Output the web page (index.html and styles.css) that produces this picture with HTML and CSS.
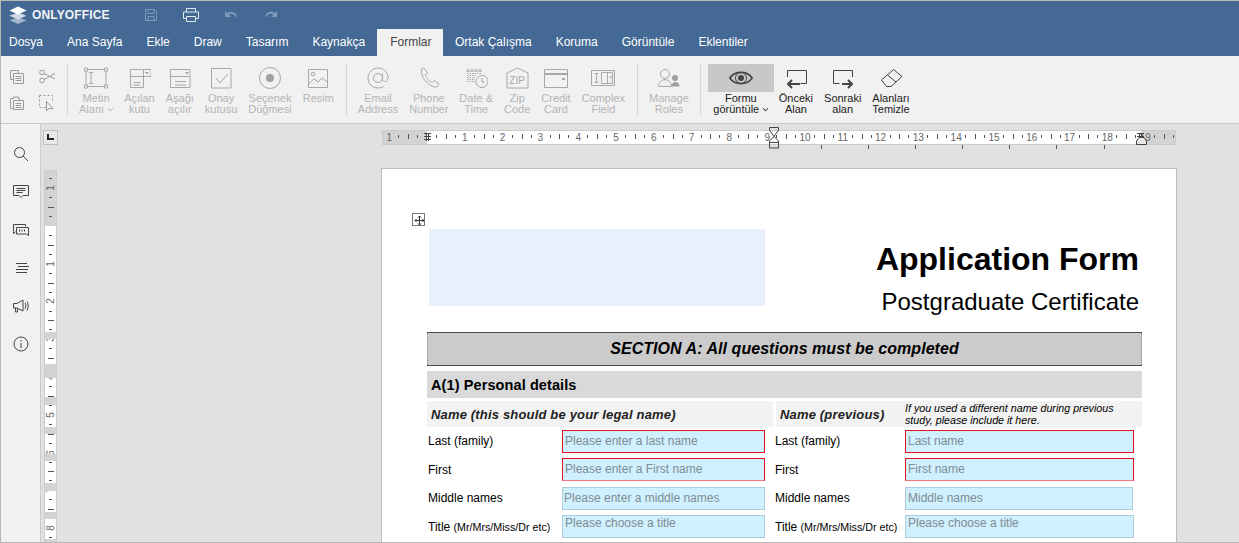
FILE: index.html
```html
<!DOCTYPE html>
<html lang="tr">
<head>
<meta charset="utf-8">
<title>ONLYOFFICE</title>
<link rel="stylesheet" href="styles.css">
</head>
<body>
<div class="app">
  <header class="header">
    <div class="titlebar">
      <svg class="logo" width="20" height="20" viewBox="0 0 20 20"><path class="l3" d="M10 12.500 1.500 15.300 10 19l8.500-3.700z"/><path class="l2" d="M10 7.500 1.500 10.800 10 14.600l8.500-3.800z"/><path class="l1" d="M10 1.500 1.500 5.500 10 9.500l8.500-4z"/></svg>
      <span class="brand">ONLYOFFICE</span>
      <svg class="tb save" width="16" height="16" viewBox="0 0 16 16"><path d="M2.500 2.500h9l2 2v9h-11zM5 2.500v4h6v-4M5 13.500v-4h6v4"/></svg>
      <svg class="tb print" width="18" height="16" viewBox="0 0 18 16"><path d="M4.500 5V1.500h9V5M4.500 11.500h-3V5h15v6.500h-3M4.500 9.500h9v5h-9z"/></svg>
      <svg class="tb undo" width="16" height="16" viewBox="0 0 16 16"><path d="M2 4v6h6L5.600 7.700C8 6 11 7 13 10l1.200-.8C12 5 8 3.500 4.300 6.300z"/></svg>
      <svg class="tb redo" width="16" height="16" viewBox="0 0 16 16"><path d="M14 4v6H8l2.400-2.300C8 6 5 7 3 10l-1.200-.8C4 5 8 3.500 11.700 6.300z"/></svg>
    </div>
    <nav class="tabs">
      <span class="tab">Dosya</span>
      <span class="tab">Ana Sayfa</span>
      <span class="tab">Ekle</span>
      <span class="tab">Draw</span>
      <span class="tab">Tasarım</span>
      <span class="tab">Kaynakça</span>
      <span class="tab active">Formlar</span>
      <span class="tab">Ortak Çalışma</span>
      <span class="tab">Koruma</span>
      <span class="tab">Görüntüle</span>
      <span class="tab">Eklentiler</span>
    </nav>
  </header>

  <section class="toolbar">
    <div class="group clip">
      <svg class="ic16 off" viewBox="0 0 16 16"><path d="M1.500 1.500h8v3M1.500 1.500v9h3M4.500 4.500h10v10h-10zM6.500 7.500h6M6.500 9.500h6M6.500 11.500h6"/></svg>
      <svg class="ic16 off" viewBox="0 0 16 16"><circle cx="3" cy="3.500" r="2.300"/><circle cx="3" cy="11.500" r="2.300"/><path d="M5 4.500l11 5.500M5 10.500l11-6"/></svg>
      <svg class="ic16 off" viewBox="0 0 16 16"><path d="M1.500 3.500h3V2h5v1.500h1V5M1.500 3.500v10h3M4.500 5.500h10v9h-10zM6.500 8.500h6M6.500 10.500h6M6.500 12.500h6"/></svg>
      <svg class="ic16 off" viewBox="0 0 16 16"><path stroke-dasharray="2 2" d="M.5.500h13v7M.5.500v12h6"/><path d="M7.500 6.500v9l2.500-2h4z"/></svg>
    </div>
    <i class="sep"></i>
    <div class="group">
      <div class="btn off">
        <svg class="ic" viewBox="0 0 24 24"><path d="M2 3.500h20M2 20.500h20M2 3.500v17M22 3.500v17M5 6.500h4M5 17.500h4M7 6.500v11"/><path class="dots" d="M.5 2h3v3h-3zM20.500 2h3v3h-3zM.5 19h3v3h-3zM20.500 19h3v3h-3z"/></svg>
        <span class="lbl">Metin<br>Alanı <b class="car"></b></span>
      </div>
      <div class="btn off">
        <svg class="ic" viewBox="0 0 24 24"><path d="M3.500 3.500h13v18h-13zM16.500 3.500h7.500v7h-7.500M3.500 10.500h13M6.500 16.500h7M6.500 19h7"/><path class="solid" d="M18 6h4l-2 2.500z"/></svg>
        <span class="lbl">Açılan<br>kutu</span>
      </div>
      <div class="btn off">
        <svg class="ic" viewBox="0 0 24 24"><path d="M2.500 3.500h19.500v18H2.500zM2.500 10.500h19.500M7 15.500h11M7 19h11"/><path class="solid" d="M17 6h4l-2 2.500z"/></svg>
        <span class="lbl">Aşağı<br>açılır</span>
      </div>
      <div class="btn off">
        <svg class="ic" viewBox="0 0 24 24"><path d="M2.500 2.500h19.500v19.500H2.500zM7 12l4 5 8-9"/></svg>
        <span class="lbl">Onay<br>kutusu</span>
      </div>
      <div class="btn off">
        <svg class="ic" viewBox="0 0 24 24"><circle cx="12" cy="12" r="10.500"/><circle class="solid" cx="12" cy="12" r="4"/></svg>
        <span class="lbl">Seçenek<br>Düğmesi</span>
      </div>
      <div class="btn off">
        <svg class="ic" viewBox="0 0 24 24"><path d="M2.500 3.500h19v18h-19zM2.500 18l5.500-5 4 3 4-4 5.500 4"/><circle cx="7" cy="8" r="1.800"/></svg>
        <span class="lbl">Resim</span>
      </div>
    </div>
    <i class="sep"></i>
    <div class="group">
      <div class="btn off">
        <svg class="ic" viewBox="0 0 24 24"><circle cx="12" cy="12" r="4.500"/><path d="M16.500 7.500v6c0 3 5.500 3 5.500-2C22 6 17 2 12 2S2 6.500 2 12s4.500 10 10 10c2 0 4-.5 5.500-1.500"/></svg>
        <span class="lbl">Email<br>Address</span>
      </div>
      <div class="btn off">
        <svg class="ic" viewBox="0 0 24 24"><path d="M4 3.500l3-1.500 3.500 5L8.500 9c.5 3 4 7 7 7.500l2-2 4.500 3.500-2 3c-7 1-17-9-15.500-17.500z"/></svg>
        <span class="lbl">Phone<br>Number</span>
      </div>
      <div class="btn off">
        <svg class="ic" viewBox="0 0 24 24"><path stroke-dasharray="1.500 1" d="M3 7.500h14M3 9.500h10M3 11.500h8M3 13.500h8M3 15.500h8"/><path d="M2 5h16M4 2.500v3M8 2.500v3M12 2.500v3M16 2.500v3"/><circle cx="18" cy="15.500" r="6"/><path d="M18 12v4h3"/></svg>
        <span class="lbl">Date &amp;<br>Time</span>
      </div>
      <div class="btn off">
        <svg class="ic" viewBox="0 0 24 24"><path d="M2 7 12.500 2 23 7v15H2z"/></svg>
        <span class="zip">ZIP</span>
        <span class="lbl">Zip<br>Code</span>
      </div>
      <div class="btn off">
        <svg class="ic" viewBox="0 0 24 24"><path d="M.5 3.500h23v18H.5z"/><path class="thick" d="M.5 8h23"/><path class="thick" d="M18 13h3"/></svg>
        <span class="lbl">Credit<br>Card</span>
      </div>
      <div class="btn off">
        <svg class="ic" viewBox="0 0 24 24"><path d="M.5 4.500h23v15H.5zM10.500 6.500h11v11h-11zM16.500 6.500v11M3.500 7.500h4M3.500 16.500h4M5.500 7.500v9"/><path class="solid" d="M18 10.500h3l-1.500 2z"/></svg>
        <span class="lbl">Complex<br>Field</span>
      </div>
    </div>
    <i class="sep"></i>
    <div class="group roles">
      <div class="btn off">
        <svg class="ic" viewBox="0 0 24 24"><circle cx="8" cy="8" r="4.500"/><path d="M1.500 20.500c0-9 13-9 13 0z"/><circle class="solid" cx="18" cy="12" r="3"/><path class="solid" d="M14.500 20.500c0-6 8-6 8 0z"/></svg>
        <span class="lbl">Manage<br>Roles</span>
      </div>
    </div>
    <i class="sep"></i>
    <div class="group on-group">
      <div class="btn view">
        <span class="eyebox"><svg class="ic" viewBox="0 0 24 24"><path class="eye" d="M.8 12C6 4.500 18 4.500 23.200 12 18 19.500 6 19.500.8 12z"/><circle cx="12" cy="12" r="5.500"/><circle class="solid" cx="12" cy="12" r="3"/></svg></span>
        <span class="lbl">Formu<br>görüntüle <b class="car"></b></span>
      </div>
      <div class="btn">
        <svg class="ic" viewBox="0 0 24 24"><path d="M3.500 11V4.500h19v13h-6"/><path class="thick" d="M16 18H4M8 14l-4 4 4 4"/></svg>
        <span class="lbl">Önceki<br>Alan</span>
      </div>
      <div class="btn">
        <svg class="ic" viewBox="0 0 24 24"><path d="M8.500 17.500h-6v-13h19V11"/><path class="thick" d="M11 18h10M17 14l4 4-4 4"/></svg>
        <span class="lbl">Sonraki<br>alan</span>
      </div>
      <div class="btn">
        <svg class="ic" viewBox="0 0 24 24"><path d="M14.500 3.500 23 10.500 12 20.500H7.500L2.500 14zM8.500 9l8.500 7"/></svg>
        <span class="lbl">Alanları<br>Temizle</span>
      </div>
    </div>
  </section>

  <div class="work">
    <aside class="side">
      <svg class="sic" viewBox="0 0 16 16"><circle cx="6.500" cy="6.500" r="5"/><path d="M10.200 10.200 15 15"/></svg>
      <svg class="sic" viewBox="0 0 16 16"><path d="M.5 1.500h15v10H10l-2 2-2-2H.5zM3.500 4.500h9M3.500 6.500h9M3.500 8.500h6"/></svg>
      <svg class="sic" viewBox="0 0 16 16"><path d="M.5 9.500v-7h12v2M.5 9.500V12l2-2.500"/><path d="M3.500 5.500h12v8l-2-1.500h-10z"/><path class="dotl" d="M6 8.500h1M8.500 8.500h1M11 8.500h1"/></svg>
      <svg class="sic" viewBox="0 0 16 16"><path d="M3 3.500h11M5 6.500h11M3 9.500h12M3 12.500h11"/></svg>
      <svg class="sic" viewBox="0 0 16 16"><path d="M.5 5.500H4l6-3.500v11L4 10H.5zM2.500 10v4h2v-3.500M12 5c1 1.500 1 4 0 6M14 3.500c1.500 2.500 1.500 6.500 0 9"/></svg>
      <svg class="sic" viewBox="0 0 16 16"><circle cx="8" cy="8" r="7"/><path d="M8 7v5M8 4v1.500"/></svg>
    </aside>

    <main class="canvas">
      <div class="corner"><i></i></div>
      <div class="vruler">
        <div class="vc"><span>1</span></div>
        <div class="vc"></div>
        <div class="vc"><span>1</span></div>
        <div class="vc"><span>2</span></div>
        <div class="vc"><span>3</span></div>
        <div class="vc"><span>4</span></div>
        <div class="vc"><span>5</span></div>
        <div class="vc"><span>6</span></div>
        <div class="vc"><span>7</span></div>
        <div class="vc"><span>8</span></div>
      </div>

      <div class="docarea">
        <div class="hruler">
          <div class="hclip">
            <div class="hcells">
              <span class="hc">1</span><span class="hc"></span><span class="hc">1</span><span class="hc">2</span><span class="hc">3</span><span class="hc">4</span><span class="hc">5</span><span class="hc">6</span><span class="hc">7</span><span class="hc">8</span><span class="hc">9</span><span class="hc">10</span><span class="hc">11</span><span class="hc">12</span><span class="hc">13</span><span class="hc">14</span><span class="hc">15</span><span class="hc">16</span><span class="hc">17</span><span class="hc">18</span><span class="hc">19</span><span class="hc"></span>
            </div>
          </div>
          <i class="hash h-left"></i>
          <i class="hash h-right"></i>
          <i class="cols"></i>
          <svg class="indent" width="12" height="22" viewBox="0 0 12 22"><path d="M1.500.5h9V3L6 9.500 1.500 3zM1.500 15.500V14L6 9.500 10.500 14v1.500zM1.500 15.500h9v5.500h-9z"/></svg>
          <svg class="rindent" width="11" height="8" viewBox="0 0 11 8"><path d="M.5 7.500V4L3 .5h5L10.500 4v3.500z"/></svg>
        </div>

        <article class="page">
          <span class="move"><svg width="11" height="11" viewBox="0 0 11 11"><path d="M5.500 1v9M1 5.500h9M4 2.500 5.500 1 7 2.500M4 8.500 5.500 10 7 8.500M2.500 4 1 5.500 2.500 7M8.500 4 10 5.500 8.500 7"/></svg></span>
          <div class="head">
            <div class="logoph"></div>
            <div class="titles">
              <h1>Application Form</h1>
              <h2>Postgraduate Certificate</h2>
            </div>
          </div>
          <div class="secA">SECTION A: All questions must be completed</div>
          <div class="secB">A(1) Personal details</div>
          <div class="names">
            <div class="nameh nl">Name (this should be your legal name)</div>
            <div class="nameh nr"><span>Name (previous)</span><em>If you used a different name during previous study, please include it here.</em></div>
          </div>
          <div class="row">
            <span class="rl">Last (family)</span><span class="f red">Please enter a last name</span>
            <span class="rl">Last (family)</span><span class="f red">Last name</span>
          </div>
          <div class="row low">
            <span class="rl">First</span><span class="f red fade">Please enter a First name</span>
            <span class="rl">First</span><span class="f red fade">First name</span>
          </div>
          <div class="row">
            <span class="rl">Middle names</span><span class="f mid tight">Please enter a middle names</span>
            <span class="rl">Middle names</span><span class="f mid narrow">Middle names</span>
          </div>
          <div class="row low">
            <span class="rl">Title <small>(Mr/Mrs/Miss/Dr etc)</small></span><span class="f ttl">Please choose a title</span>
            <span class="rl">Title <small>(Mr/Mrs/Miss/Dr etc)</small></span><span class="f ttl">Please choose a title</span>
          </div>
        </article>
      </div>
    </main>
  </div>
</div>
</body>
</html>
```
FILE: styles.css
```css
* { box-sizing: border-box; }
html, body { margin: 0; padding: 0; height: 100%; overflow: hidden; }
body { font-family: "Liberation Sans", Arial, sans-serif; font-size: 11px; color: #000; }
svg { display: block; fill: none; stroke-width: 1; }

.app { height: 543px; width: 1239px; display: flex; flex-direction: column; border: 1px solid #b8b8b8; border-right: 0; overflow: hidden; }

.header { background: #446995; flex: none; height: 55px; }
.titlebar { height: 28px; display: flex; align-items: center; padding-left: 7px; color: #fff; }
.logo { flex: none; }
.logo .l1 { fill: #fff; }
.logo .l2 { fill: #d0d9e5; }
.logo .l3 { fill: #a3b6cc; }
.brand { font-size: 12px; font-weight: 700; margin-left: 4px; letter-spacing: .15px; width: 87px; color: #f0f3f7; }
.tb { flex: none; }
.save { margin-left: 24px; stroke: #7f9abb; }
.print { margin-left: 23px; stroke: #e4e9f0; }
.undo { margin-left: 23px; fill: #7f9abb; stroke: none; }
.redo { margin-left: 24px; fill: #7f9abb; stroke: none; }

.tabs { display: flex; height: 27px; margin-left: -4px; }
.tab { padding: 0 12px; line-height: 27px; font-size: 12px; color: #fff; }
.tab.active { background: #f1f1f1; color: #444; padding: 0 12px 0 13px; margin-right: -.5px; }

.toolbar { flex: none; height: 68px; background: #f1f1f1; border-bottom: 1px solid #cbcbcb; display: flex; padding-top: 8px; }
.group { display: flex; gap: 11px; }
.clip { display: grid; grid-template-columns: 16px 16px; grid-template-rows: 16px 16px; gap: 10px 14px; margin: 5px 0 0 8px; width: 46px; }
.ic16 { width: 16px; height: 16px; stroke: #9a9a9a; }
.sep { flex: none; width: 1px; height: 52px; background: #d8d8d8; margin: 0 11px 0 12px; }
.btn { display: flex; flex-direction: column; align-items: center; position: relative; }
.ic { width: 24px; height: 24px; stroke: #444; margin-top: 2px; }
.off .ic { stroke: #a8a8a8; }
.ic .solid { fill: #444; stroke: none; }
.off .ic .solid { fill: #a0a0a0; }
.ic .dots { fill: #f1f1f1; }
.ic .thick { stroke-width: 2; }
.ic .eye { stroke-width: 1.600; }
.lbl { display: block; font-size: 11px; line-height: 11px; text-align: center; margin-top: 3px; color: #222; white-space: nowrap; }
.off .lbl { color: #b4b4b4; }
.zip { position: absolute; top: 12px; font-size: 10px; line-height: 10px; color: #a8a8a8; }
.car { display: inline-block; width: 5px; height: 5px; border: solid currentColor; border-width: 0 1px 1px 0; transform: translateY(-2px) rotate(45deg) scale(.8); margin-left: 1px; }
.roles { margin-right: -1px; }
.on-group { margin-left: -4px; gap: 11px; }
.view { width: 66px; margin-right: -6px; }
.eyebox { display: flex; justify-content: center; width: 66px; height: 28px; background: #c8c8c8; }
.view .lbl { margin-top: 1px; }

.work { flex: 1; display: flex; min-height: 0; }
.side { flex: none; width: 40px; background: #f1f1f1; border-right: 1px solid #cbcbcb; display: flex; flex-direction: column; align-items: center; padding-top: 22px; gap: 22px; }
.sic { width: 16px; height: 16px; stroke: #444; }
.sic .dotl { stroke-width: 2; }

.canvas { flex: 1; background: #e1e1e1; display: flex; position: relative; min-width: 0; }
.corner { position: absolute; left: 2px; top: 6px; width: 15px; height: 15px; background: #e8e8e8; border: 1px solid #c0c0c0; }
.corner i { display: block; width: 7px; height: 6px; margin: 3px 0 0 3px; border: solid #222; border-width: 0 0 2px 2px; }

.vruler { flex: none; position: relative; width: 13px; height: 373px; margin: 46px 0 0 3px; border: solid #cbcbcb; border-width: 0 1px; background: linear-gradient(#d3d3d3 56px, #fff 56px); overflow: hidden; }
.vruler::after { content: ""; position: absolute; inset: 0; background:
  linear-gradient(#d3d3d3, #d3d3d3) 0 162px/100% 7px no-repeat,
  linear-gradient(#d3d3d3, #d3d3d3) 0 194px/100% 14px no-repeat,
  linear-gradient(#d3d3d3, #d3d3d3) 0 227px/100% 8px no-repeat,
  linear-gradient(#d3d3d3, #d3d3d3) 0 257px/100% 7px no-repeat,
  linear-gradient(#d3d3d3, #d3d3d3) 0 284px/100% 7px no-repeat,
  linear-gradient(#d3d3d3, #d3d3d3) 0 313px/100% 8px no-repeat,
  linear-gradient(#d3d3d3, #d3d3d3) 0 342px/100% 7px no-repeat,
  linear-gradient(#d3d3d3, #d3d3d3) 0 369px/100% 4px no-repeat; }
.vc { height: 37.800px; display: flex; align-items: center; justify-content: center; background:
  linear-gradient(#555, #555) center 0/6px 1px no-repeat,
  linear-gradient(#555, #555) center 9px/3px 1px no-repeat,
  linear-gradient(#555, #555) center 28px/3px 1px no-repeat; }
.vc:first-child { margin-top: -.9px; }
.vc span { font-size: 10px; line-height: 10px; color: #666; transform: rotate(-90deg); }

.docarea { flex: none; width: 796px; margin-left: 324px; display: flex; flex-direction: column; }
.hruler { flex: none; position: relative; height: 15px; width: 794px; margin: 6px 0 0 1px; border: 1px solid #cbcbcb; background: linear-gradient(90deg, #d3d3d3 44px, #fff 44px, #fff 758px, #d3d3d3 758px); }
.hclip { height: 13px; overflow: hidden; }
.hcells { display: flex; margin-left: -12.700px; height: 13px; }
.hc { flex: none; width: 37.800px; text-align: center; font-size: 10px; line-height: 13px; color: #666; background:
  linear-gradient(#555, #555) 0 3px/1px 5px no-repeat,
  linear-gradient(#555, #555) 9px 4px/1px 3px no-repeat,
  linear-gradient(#555, #555) 28px 4px/1px 3px no-repeat; }
.hash { position: absolute; top: 2px; width: 7px; height: 8px; background: repeating-linear-gradient(#444 0 1px, transparent 1px 3px), linear-gradient(90deg, transparent 2px, #444 2px 3px, transparent 3px 4px, #444 4px 5px, transparent 5px); }
.h-left { left: 41px; }
.h-right { left: 754px; }
.cols { position: absolute; left: 438px; top: 14px; width: 285px; height: 4px; background: repeating-linear-gradient(90deg, #555 0 1px, transparent 1px 47.100px); }
.indent { position: absolute; left: 385px; top: -4px; stroke: #444; }
.rindent { position: absolute; left: 753px; top: 6px; stroke: #444; }
.rindent path { fill: #e8e8e8; }

.page { flex: 1; position: relative; margin-top: 23px; background: #fff; border: 1px solid #bdbdc2; border-bottom: 0; padding: 60px 34px 0 45px; min-height: 0; overflow: hidden; }
.move { position: absolute; left: 30px; top: 44px; width: 13px; height: 13px; border: 1px solid #777; padding: .5px; }
.move svg { stroke: #333; }
.head { display: flex; justify-content: space-between; height: 103px; }
.logoph { width: 336px; height: 77px; margin-left: 2px; background: #e8f0fb; }
.titles { text-align: right; padding-right: 3px; }
h1 { margin: 11px 0 0; font-size: 32px; line-height: 38px; font-weight: 700; }
h2 { margin: 10px 0 0; font-size: 24px; line-height: 28px; font-weight: 400; }
.secA { height: 34px; background: #cbcbcb; border: solid #4d4a3a; border-width: 1px 0; font: italic 700 16px/32px "Liberation Sans", Arial, sans-serif; text-align: center; letter-spacing: .05px; position: relative; }
.secA::before, .secA::after { content: ""; position: absolute; top: 0; bottom: 0; border-left: 1px dotted #7d8a99; }
.secA::before { left: 0; }
.secA::after { right: 0; }
.secB { height: 27px; margin-top: 5px; background: #d9d9d9; font-size: 14.500px; font-weight: 700; line-height: 28px; padding-left: 4px; letter-spacing: .1px; }
.names { display: flex; gap: 3px; margin-top: 3px; height: 26px; }
.nameh { background: #f2f2f2; font: italic 700 13px/27px "Liberation Sans", Arial, sans-serif; padding-left: 4px; letter-spacing: .17px; color: #222; }
.nl { width: 346px; }
.nr { width: 366px; display: flex; }
.nr span { width: 125px; flex: none; }
.nr em { font: italic 400 10.700px/12px "Liberation Sans", Arial, sans-serif; padding-top: 1px; letter-spacing: 0; color: #000; width: 222px; }
.row { display: grid; grid-template-columns: 135px 203px 140px 229px; height: 28.400px; padding-top: 3px; font-size: 12px; }
.row:last-child { height: 26px; }
.rl { padding-left: 1px; line-height: 22px; white-space: nowrap; }
.low .rl { line-height: 24px; }
.rl small { font-size: 10.700px; }
.rl:nth-child(3) { margin-left: 10px; padding-left: 0; }
.f { height: 23px; background: #cff0fe; color: #7f8c92; line-height: 20px; padding-left: 2px; border: 1px solid #aecbd9; white-space: nowrap; }
.red { border-color: #e8111a; }
.fade { border-bottom-color: #f07a80; }
.tight { padding-left: 1px; }
.narrow { margin-right: 1px; }
.ttl { line-height: 15px; }
```
